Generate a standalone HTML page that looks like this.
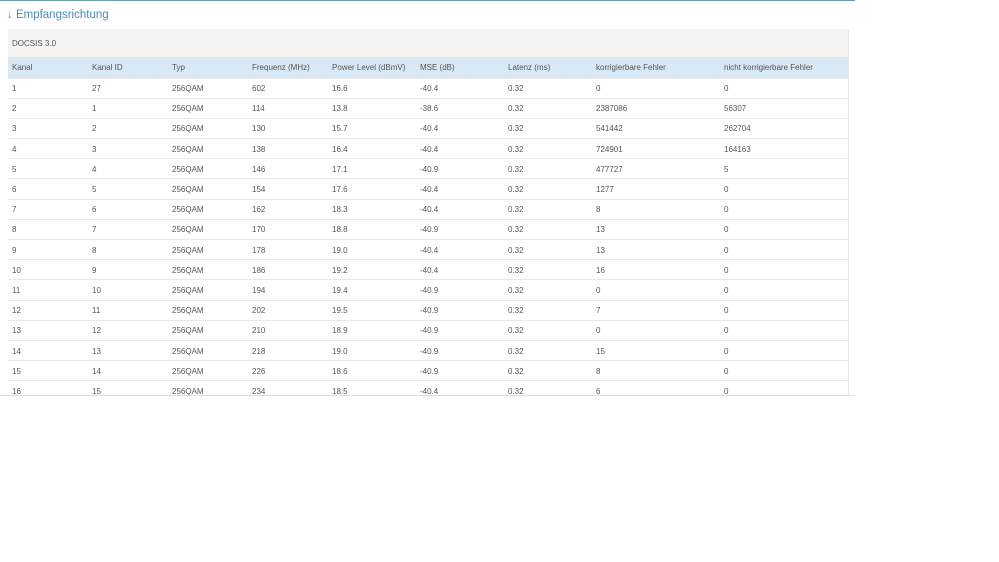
<!DOCTYPE html><html><head><style>
body{margin:0;background:#fff;font-family:"Liberation Sans",sans-serif;width:999px;height:562px;overflow:hidden;position:relative}
.top{position:absolute;left:0;top:0;width:855px;height:1px;background:#6a9fb0}
h1{position:absolute;left:7px;top:9px;margin:0;font-size:11.5px;font-weight:normal;color:#4a8bb5}
.wrap{position:absolute;left:0;top:0;width:855px;height:395px;overflow:hidden;border-bottom:1px solid #ddd}
.box{position:absolute;left:8px;top:29px;width:840px;border-right:1px solid #e6e6e6}
.doc{height:28px;background:#f4f4f2;font-size:8px;color:#555;line-height:29px;padding-left:4px}
table{border-collapse:collapse;width:840px;font-size:8px;color:#555}
td{height:20.2px;padding:1px 0 0 4px;border-bottom:1px solid #e8e8e8;box-sizing:border-box}
tr.h td{background:#d9e8f5;height:21px;color:#555}
</style></head><body>
<div class="top"></div>
<h1>↓ Empfangsrichtung</h1>
<div class="wrap"><div class="box">
<div class="doc">DOCSIS 3.0</div>
<table>
<colgroup><col style="width:80px"><col style="width:80px"><col style="width:80px"><col style="width:80px"><col style="width:88px"><col style="width:88px"><col style="width:88px"><col style="width:128px"><col></colgroup>
<tr class="h"><td>Kanal</td><td>Kanal ID</td><td>Typ</td><td>Frequenz (MHz)</td><td>Power Level (dBmV)</td><td>MSE (dB)</td><td>Latenz (ms)</td><td>korrigierbare Fehler</td><td>nicht korrigierbare Fehler</td></tr>
<tr><td>1</td><td>27</td><td>256QAM</td><td>602</td><td>16.6</td><td>-40.4</td><td>0.32</td><td>0</td><td>0</td></tr>
<tr><td>2</td><td>1</td><td>256QAM</td><td>114</td><td>13.8</td><td>-38.6</td><td>0.32</td><td>2387086</td><td>56307</td></tr>
<tr><td>3</td><td>2</td><td>256QAM</td><td>130</td><td>15.7</td><td>-40.4</td><td>0.32</td><td>541442</td><td>262704</td></tr>
<tr><td>4</td><td>3</td><td>256QAM</td><td>138</td><td>16.4</td><td>-40.4</td><td>0.32</td><td>724901</td><td>164163</td></tr>
<tr><td>5</td><td>4</td><td>256QAM</td><td>146</td><td>17.1</td><td>-40.9</td><td>0.32</td><td>477727</td><td>5</td></tr>
<tr><td>6</td><td>5</td><td>256QAM</td><td>154</td><td>17.6</td><td>-40.4</td><td>0.32</td><td>1277</td><td>0</td></tr>
<tr><td>7</td><td>6</td><td>256QAM</td><td>162</td><td>18.3</td><td>-40.4</td><td>0.32</td><td>8</td><td>0</td></tr>
<tr><td>8</td><td>7</td><td>256QAM</td><td>170</td><td>18.8</td><td>-40.9</td><td>0.32</td><td>13</td><td>0</td></tr>
<tr><td>9</td><td>8</td><td>256QAM</td><td>178</td><td>19.0</td><td>-40.4</td><td>0.32</td><td>13</td><td>0</td></tr>
<tr><td>10</td><td>9</td><td>256QAM</td><td>186</td><td>19.2</td><td>-40.4</td><td>0.32</td><td>16</td><td>0</td></tr>
<tr><td>11</td><td>10</td><td>256QAM</td><td>194</td><td>19.4</td><td>-40.9</td><td>0.32</td><td>0</td><td>0</td></tr>
<tr><td>12</td><td>11</td><td>256QAM</td><td>202</td><td>19.5</td><td>-40.9</td><td>0.32</td><td>7</td><td>0</td></tr>
<tr><td>13</td><td>12</td><td>256QAM</td><td>210</td><td>18.9</td><td>-40.9</td><td>0.32</td><td>0</td><td>0</td></tr>
<tr><td>14</td><td>13</td><td>256QAM</td><td>218</td><td>19.0</td><td>-40.9</td><td>0.32</td><td>15</td><td>0</td></tr>
<tr><td>15</td><td>14</td><td>256QAM</td><td>226</td><td>18.6</td><td>-40.9</td><td>0.32</td><td>8</td><td>0</td></tr>
<tr><td>16</td><td>15</td><td>256QAM</td><td>234</td><td>18.5</td><td>-40.4</td><td>0.32</td><td>6</td><td>0</td></tr>
</table></div></div>
</body></html>
